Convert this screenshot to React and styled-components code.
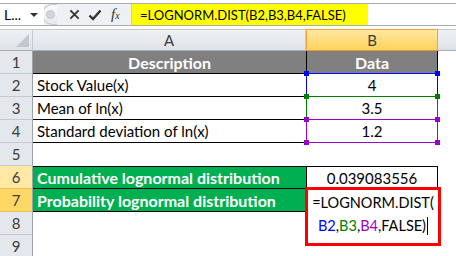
import React from 'react';
import styled, { createGlobalStyle, css } from 'styled-components';

const GlobalStyle = createGlobalStyle`
  html, body { margin: 0; padding: 0; background: #fff; }
  body { font-family: Lato, "Liberation Sans", sans-serif; }
`;

const rows = [
  { n: 1 },
  { n: 2, a: 'Stock Value(x)', b: '4', ref: '#0000ff' },
  { n: 3, a: 'Mean of ln(x)', b: '3.5', ref: '#008000' },
  { n: 4, a: 'Standard deviation of ln(x)', b: '1.2', ref: '#9900cc' },
];

export default function App() {
  return (
    <Page>
      <GlobalStyle />
      <FormulaBar>
        <NameBox>
          L...
          <Caret />
        </NameBox>
        <Grip><Dot /></Grip>
        <Tools>
          <ToolIcon viewBox="0 0 12 12" width="11" height="11">
            <path d="M1.5 1.5 L10.5 10.5 M10.5 1.5 L1.5 10.5" stroke="#333" strokeWidth="2" />
          </ToolIcon>
          <ToolIcon viewBox="0 0 14 12" width="14" height="12">
            <path d="M1.5 6.5 L5 10 L12.5 1.5" stroke="#333" strokeWidth="2.4" fill="none" />
          </ToolIcon>
          <Fx>f<sub>x</sub></Fx>
        </Tools>
        <FormulaInput>
          <Highlight>=LOGNORM.DIST(B2,B3,B4,FALSE)</Highlight>
        </FormulaInput>
      </FormulaBar>

      <Sheet>
        <Corner><CornerMark /></Corner>
        <ColHead>A</ColHead>
        <ColHead $active>B</ColHead>
        <Filler $head />

        {rows.map((r) => (
          <React.Fragment key={r.n}>
            <RowHead>{r.n}</RowHead>
            {r.n === 1 ? (
              <>
                <TitleCell>Description</TitleCell>
                <TitleCell $boxed>Data</TitleCell>
              </>
            ) : (
              <>
                <TextCell>{r.a}</TextCell>
                <RefCell $color={r.ref}>
                  {r.b}
                  <Handle $color={r.ref} style={{ left: -3, top: -3 }} />
                  <Handle $color={r.ref} style={{ right: -3, top: -3 }} />
                  <Handle $color={r.ref} style={{ left: -3, bottom: -3 }} />
                  <Handle $color={r.ref} style={{ right: -3, bottom: -3 }} />
                </RefCell>
              </>
            )}
            <Filler />
          </React.Fragment>
        ))}

        <RowHead>5</RowHead>
        <Blank />
        <Blank />
        <Filler />

        <RowHead $sel="light">6</RowHead>
        <GreenCell $top>Cumulative lognormal distribution</GreenCell>
        <ValueCell>0.039083556</ValueCell>
        <Filler />

        <RowHead $sel="strong">7</RowHead>
        <GreenCell $bottom>Probability lognormal distribution</GreenCell>
        <EditHost>
          <EditBox>
            <span>=LOGNORM.DIST(</span>
            <span>
              <Ref $c="#0000ff">B2</Ref>,<Ref $c="#008000">B3</Ref>,<Ref $c="#9900cc">B4</Ref>,FALSE)
              <Cursor />
            </span>
          </EditBox>
        </EditHost>
        <Filler />

        <RowHead>8</RowHead>
        <Blank />
        <Blank />
        <Filler />

        <RowHead>9</RowHead>
        <Blank />
        <Blank />
        <Filler />
      </Sheet>
    </Page>
  );
}

const Page = styled.div`
  width: 456px;
  height: 256px;
  overflow: hidden;
  background: #fff;
  font-family: Lato, "Liberation Sans", sans-serif;
`;

const FormulaBar = styled.div`
  margin-top: 3px;
  height: 21px;
  display: flex;
  align-items: stretch;
  border-top: 1px solid #a9acb1;
  border-bottom: 1px solid #a9acb1;
  background: #eef0f3;
  box-sizing: content-box;
`;

const NameBox = styled.div`
  width: 44px;
  background: #fff;
  display: flex;
  align-items: center;
  padding-left: 4px;
  box-sizing: border-box;
  font-size: 14px;
  color: #000;
  position: relative;
`;

const Caret = styled.span`
  position: absolute;
  right: 6px;
  top: 9px;
  width: 0;
  height: 0;
  border-left: 4px solid transparent;
  border-right: 4px solid transparent;
  border-top: 4px solid #333;
`;

const Grip = styled.div`
  width: 14px;
  margin-left: -2px;
  border: 1px solid #c4c7cc;
  border-radius: 11px 0 0 11px;
  border-right: none;
  background: linear-gradient(#fafbfc, #e6e8eb);
  display: flex;
  align-items: center;
  justify-content: center;
`;

const Dot = styled.span`
  width: 7px;
  height: 7px;
  border-radius: 50%;
  background: #d2d5d9;
  border: 1px solid #c2c5ca;
`;

const Tools = styled.div`
  width: 74px;
  display: flex;
  align-items: center;
  gap: 8px;
  padding-left: 12px;
  box-sizing: border-box;
`;

const ToolIcon = styled.svg`
  display: block;
`;

const Fx = styled.span`
  font-family: "Liberation Serif", serif;
  font-style: italic;
  font-size: 15px;
  color: #333;
  line-height: 1;
  margin-left: 1px;
  sub {
    font-size: 10px;
    vertical-align: 0;
  }
`;

const FormulaInput = styled.div`
  flex: 1;
  background: #fff;
  display: flex;
  border-left: 1px solid #c8cbd0;
`;

const Highlight = styled.div`
  width: 236px;
  background: #ffff00;
  padding-left: 8px;
  display: flex;
  align-items: center;
  font-size: 13px;
  color: #000;
  box-sizing: border-box;
  white-space: nowrap;
`;

const Sheet = styled.div`
  margin-top: 3px;
  display: grid;
  grid-template-columns: 33px 273px 132px 18px;
  grid-template-rows: 22px repeat(9, 23px);
  background: #fff;
`;

const headBase = css`
  background: linear-gradient(#eef0f3, #dfe3e8);
  border-right: 1px solid #c5c9cf;
  border-bottom: 1px solid #a9acb1;
  box-sizing: border-box;
  display: flex;
  align-items: center;
  justify-content: center;
  font-size: 15px;
  color: #3b3b3b;
`;

const Corner = styled.div`
  ${headBase};
  border-top: 1px solid #c5c9cf;
  position: relative;
`;

const CornerMark = styled.span`
  position: absolute;
  right: 3px;
  bottom: 3px;
  width: 0;
  height: 0;
  border-left: 13px solid transparent;
  border-bottom: 13px solid #c3c7cd;
`;

const ColHead = styled.div`
  ${headBase};
  border-top: 1px solid #c5c9cf;
  ${(p) =>
    p.$active &&
    css`
      background: linear-gradient(#ffe7a2, #ffd35c);
      border: 1px solid #f2a33a;
      border-bottom: 1px solid #e39a2e;
    `}
`;

const Filler = styled.div`
  background: ${(p) => (p.$head ? 'linear-gradient(#eef0f3, #dfe3e8)' : '#fff')};
  border-top: ${(p) => (p.$head ? '1px solid #c5c9cf' : 'none')};
  border-bottom: ${(p) => (p.$head ? '1px solid #a9acb1' : 'none')};
  box-sizing: border-box;
`;

const selColors = {
  light: '#ffe8a3',
  strong: '#ffd764',
};

const RowHead = styled.div`
  ${headBase};
  background: ${(p) => selColors[p.$sel] || '#e4e7eb'};
  border-bottom: 1px solid ${(p) => (p.$sel ? '#f0c060' : '#c5c9cf')};
  border-right: 1px solid #9da2a8;
  color: #3b3b3b;
`;

const cellText = css`
  box-sizing: border-box;
  display: flex;
  align-items: center;
  font-size: 15px;
  color: #000;
  white-space: nowrap;
`;

const TitleCell = styled.div`
  ${cellText};
  background: #808080;
  color: #fff;
  font-weight: 700;
  font-size: 16px;
  justify-content: center;
  border-bottom: 1px solid #000;
  ${(p) =>
    p.$boxed &&
    css`
      border-left: 1px solid #000;
      border-right: 1px solid #000;
    `}
`;

const TextCell = styled.div`
  ${cellText};
  padding-left: 4px;
  border-bottom: 1px solid #000;
`;

const RefCell = styled.div`
  ${cellText};
  justify-content: center;
  position: relative;
  border: 1px solid ${(p) => p.$color};
  margin-top: -1px;
  height: 24px;
`;

const Handle = styled.span`
  position: absolute;
  width: 5px;
  height: 5px;
  background: ${(p) => p.$color};
`;

const Blank = styled.div`
  background: #fff;
`;

const GreenCell = styled.div`
  ${cellText};
  background: #00b050;
  color: #fff;
  font-weight: 700;
  font-size: 16px;
  padding-left: 4px;
  border-top: ${(p) => (p.$top ? '1px solid #000' : 'none')};
  border-bottom: 1px solid #000;
`;

const ValueCell = styled.div`
  ${cellText};
  justify-content: center;
  border: 1px solid #000;
`;

const EditHost = styled.div`
  position: relative;
`;

const EditBox = styled.div`
  position: absolute;
  left: -1px;
  top: -2px;
  width: 136px;
  height: 59px;
  box-sizing: border-box;
  border: 3px solid #ff0000;
  background: #fff;
  display: flex;
  flex-direction: column;
  align-items: center;
  padding-top: 1px;
  font-size: 14.5px;
  line-height: 23px;
  color: #000;
  z-index: 2;
  white-space: nowrap;
`;

const Ref = styled.span`
  color: ${(p) => p.$c};
`;

const Cursor = styled.span`
  display: inline-block;
  width: 1px;
  height: 18px;
  background: #000;
  vertical-align: -4px;
  margin-left: 1px;
`;
